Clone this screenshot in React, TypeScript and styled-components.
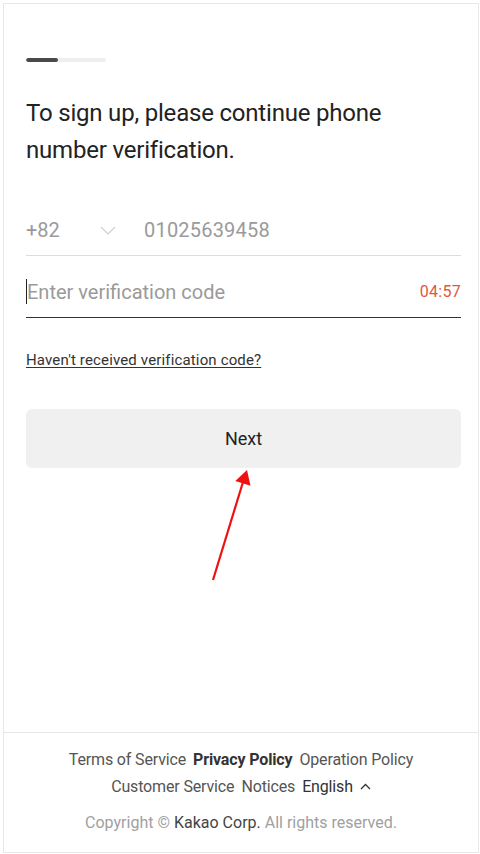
import styled, { createGlobalStyle } from 'styled-components'

const GlobalStyle = createGlobalStyle`
  html, body {
    margin: 0;
    padding: 0;
    background: #ffffff;
  }
  body {
    font-family: Roboto, "Noto Sans", "Liberation Sans", sans-serif;
    color: #222222;
  }
`

const App = () => {
  return (
    <>
      <GlobalStyle />
      <Page>
        <Frame>
          <Main>
            <Progress>
              <ProgressFill $percent={40} />
            </Progress>
            <Title>
              To sign up, please continue phone
              <br />
              number verification.
            </Title>
            <PhoneRow>
              <CountryCode>+82</CountryCode>
              <ChevronDown width="16" height="9" viewBox="0 0 16 9">
                <path d="M1 1l7 7 7-7" fill="none" stroke="#cfcfcf" strokeWidth="1.2" />
              </ChevronDown>
              <PhoneNumber>01025639458</PhoneNumber>
            </PhoneRow>
            <CodeRow>
              <Caret />
              <CodeInput placeholder="Enter verification code" />
              <Timer>04:57</Timer>
            </CodeRow>
            <ResendLink href="#">Haven't received verification code?</ResendLink>
            <NextButton>Next</NextButton>
          </Main>
          <Footer>
            <FooterLinks>
              <FooterLink>Terms of Service</FooterLink>
              <FooterLink $bold>Privacy Policy</FooterLink>
              <FooterLink>Operation Policy</FooterLink>
            </FooterLinks>
            <FooterLinks>
              <FooterLink>Customer Service</FooterLink>
              <FooterLink>Notices</FooterLink>
              <LangButton>
                English
                <svg width="11" height="7" viewBox="0 0 11 7">
                  <path d="M1 6l4.5-4.5L10 6" fill="none" stroke="#333" strokeWidth="1.3" />
                </svg>
              </LangButton>
            </FooterLinks>
            <Copyright>
              Copyright © <Corp>Kakao Corp.</Corp> All rights reserved.
            </Copyright>
          </Footer>
        </Frame>
        <Annotation width="60" height="125" viewBox="0 0 60 125">
          <line x1="13" y1="118" x2="43" y2="20" stroke="#ee1111" strokeWidth="2.2" />
          <polygon points="47,8 50.5,23.8 35.3,19" fill="#ee1111" />
        </Annotation>
      </Page>
    </>
  )
}

export default App

const Page = styled.div`
  position: relative;
  width: 480px;
  height: 854px;
  box-sizing: border-box;
  padding: 3px 1px 1px 3px;
`
const Frame = styled.div`
  display: flex;
  flex-direction: column;
  height: 100%;
  box-sizing: border-box;
  border: 1px solid #e8e8e8;
`
const Main = styled.div`
  flex: 1;
  display: flex;
  flex-direction: column;
  padding: 54px 17px 0 22px;
`
const Progress = styled.div`
  width: 80px;
  height: 4px;
  border-radius: 2px;
  background-color: #eeeeee;
  overflow: hidden;
`
const ProgressFill = styled.div<{ $percent: number }>`
  width: ${(p) => p.$percent}%;
  height: 100%;
  border-radius: 2px;
  background-color: #4a4a4a;
`
const Title = styled.h1`
  margin: 33px 0 0;
  font-size: 24px;
  font-weight: 400;
  line-height: 37px;
  color: #222222;
  letter-spacing: -0.2px;
`
const PhoneRow = styled.div`
  display: flex;
  align-items: center;
  height: 50px;
  margin-top: 36px;
  border-bottom: 1px solid #dddddd;
`
const CountryCode = styled.span`
  width: 74px;
  font-size: 20px;
  color: #9a9a9a;
`
const ChevronDown = styled.svg`
  margin-right: 28px;
`
const PhoneNumber = styled.span`
  font-size: 20px;
  color: #9a9a9a;
  letter-spacing: 0.2px;
`
const CodeRow = styled.div`
  display: flex;
  align-items: center;
  height: 62px;
  padding-top: 10px;
  box-sizing: border-box;
  border-bottom: 1px solid #333333;
`
const Caret = styled.span`
  width: 1px;
  height: 25px;
  background-color: #222222;
`
const CodeInput = styled.input`
  flex: 1;
  min-width: 0;
  border: 0;
  outline: none;
  padding: 0;
  font-family: Roboto, "Noto Sans", sans-serif;
  font-size: 20px;
  color: #222222;
  background: transparent;
  &::placeholder {
    color: #9a9a9a;
  }
`
const Timer = styled.span`
  font-size: 16px;
  color: #e0583f;
  letter-spacing: 0.3px;
`
const ResendLink = styled.a`
  align-self: flex-start;
  margin-top: 32px;
  font-size: 15px;
  line-height: 20px;
  color: #333333;
  letter-spacing: 0.15px;
  text-decoration: underline;
  text-underline-offset: 2px;
`
const NextButton = styled.button`
  margin-top: 39px;
  height: 59px;
  border: 0;
  border-radius: 6px;
  background-color: #f0f0f0;
  font-family: Roboto, "Noto Sans", sans-serif;
  font-size: 18px;
  color: #222222;
  cursor: pointer;
`
const Footer = styled.footer`
  display: flex;
  flex-direction: column;
  align-items: center;
  padding: 13px 0 17px;
  border-top: 1px solid #e6e6e6;
`
const FooterLinks = styled.div`
  display: flex;
  align-items: center;
  gap: 7px;
  line-height: 27px;
`
const FooterLink = styled.a<{ $bold?: boolean }>`
  font-size: 16px;
  font-weight: ${(p) => (p.$bold ? 700 : 400)};
  color: ${(p) => (p.$bold ? '#333333' : '#555555')};
  letter-spacing: -0.15px;
  cursor: pointer;
`
const LangButton = styled.span`
  display: flex;
  align-items: center;
  gap: 7px;
  font-size: 16px;
  color: #333333;
  letter-spacing: -0.15px;
`
const Copyright = styled.p`
  margin: 10px 0 0;
  font-size: 16px;
  line-height: 25px;
  color: #a0a0a0;
`
const Corp = styled.span`
  color: #444444;
`
const Annotation = styled.svg`
  position: absolute;
  left: 200px;
  top: 462px;
  pointer-events: none;
`
